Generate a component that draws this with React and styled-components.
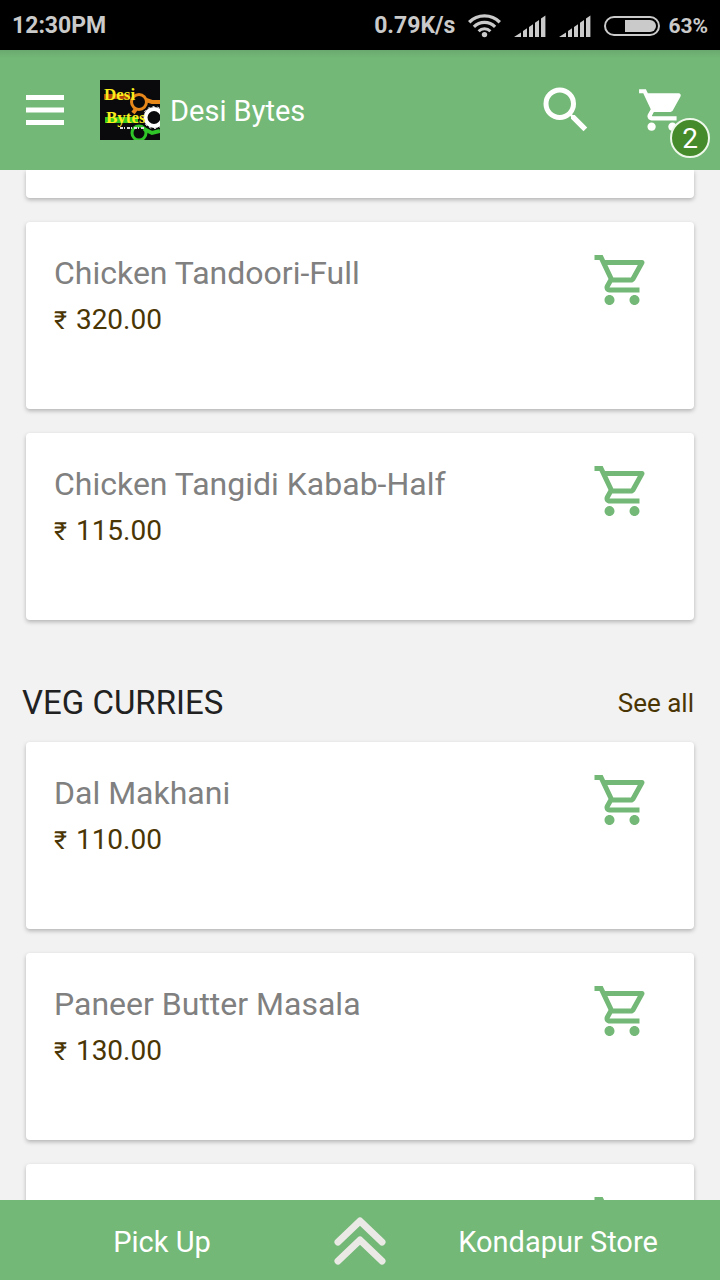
import React from "react";
import styled, { createGlobalStyle } from "styled-components";
import { MdSearch, MdShoppingCart, MdOutlineShoppingCart } from "react-icons/md";

const sections = [
  {
    id: "starters",
    items: [
      { id: 1, cut: true },
      { id: 2, title: "Chicken Tandoori-Full", price: "320.00" },
      { id: 3, title: "Chicken Tangidi Kabab-Half", price: "115.00" }
    ]
  },
  {
    id: "veg-curries",
    title: "VEG CURRIES",
    items: [
      { id: 4, title: "Dal Makhani", price: "110.00" },
      { id: 5, title: "Paneer Butter Masala", price: "130.00" },
      { id: 6 }
    ]
  }
];

export default function App() {
  return (
    <>
      <GlobalStyle />
      <Screen>
        <StatusBar />
        <Navbar />
        <Menu>
          {sections.map(section => (
            <section key={section.id} id={section.id}>
              {section.title && (
                <SectionHeader>
                  <h2>{section.title}</h2>
                  <a href={`#${section.id}`}>See all</a>
                </SectionHeader>
              )}
              <CardList>
                {section.items.map(item => (
                  <Product key={item.id} item={item} />
                ))}
              </CardList>
            </section>
          ))}
        </Menu>
        <BottomBar>
          <BarButton>Pick Up</BarButton>
          <BarButton aria-label="Expand">
            <ChevronsIcon />
          </BarButton>
          <BarButton>Kondapur Store</BarButton>
        </BottomBar>
      </Screen>
    </>
  );
}

function StatusBar() {
  return (
    <StatusWrapper>
      <span>12:30PM</span>
      <StatusGroup>
        <span>0.79K/s</span>
        <WifiIcon />
        <SignalIcon />
        <SignalIcon />
        <Battery>
          <BatteryIcon />
          <small>63%</small>
        </Battery>
      </StatusGroup>
    </StatusWrapper>
  );
}

function Navbar() {
  return (
    <NavWrapper>
      <IconButton aria-label="Menu">
        <MenuIcon />
      </IconButton>
      <Brand href="#home">
        <Logo />
        <span>Desi Bytes</span>
      </Brand>
      <IconButton aria-label="Search">
        <MdSearch size={60} />
      </IconButton>
      <CartButton aria-label="Cart">
        <MdShoppingCart size={50} />
        <Badge>2</Badge>
      </CartButton>
    </NavWrapper>
  );
}

function Product({ item }) {
  // the card that is already scrolled under the navbar
  if (item.cut) {
    return <Card $cut />;
  }

  return (
    <Card>
      <CardText>
        <h3>{item.title}</h3>
        {item.price && (
          <p>
            <Rupee>₹</Rupee> {item.price}
          </p>
        )}
      </CardText>
      <IconButton $green aria-label="Add to cart">
        <MdOutlineShoppingCart size={60} />
      </IconButton>
    </Card>
  );
}

function MenuIcon() {
  return (
    <svg width="38" height="30" viewBox="0 0 38 30" fill="currentColor">
      <rect width="38" height="5" />
      <rect y="12.5" width="38" height="5" />
      <rect y="25" width="38" height="5" />
    </svg>
  );
}

function WifiIcon() {
  return (
    <svg width="33" height="24" viewBox="0 0 33 24" fill="none" stroke="currentColor">
      <path d="M1.2 8.2a21.6 21.6 0 0 1 30.6 0" strokeWidth="3.4" />
      <path d="M5.9 12.8a15 15 0 0 1 21.2 0" strokeWidth="3.2" />
      <path d="M10.6 17.2a8.4 8.4 0 0 1 11.8 0" strokeWidth="3" />
      <circle cx="16.5" cy="20.6" r="2.7" fill="currentColor" stroke="none" />
    </svg>
  );
}

function SignalIcon() {
  return (
    <svg width="32" height="22" viewBox="0 0 32 22" fill="currentColor">
      <path d="M0 22L7 17.4V22zM9 16l4-2.8V22H9zM15 12l4-2.8V22h-4zM21 7.8l4-2.8V22h-4zM27 3.4L31.4 .4V22H27z" />
    </svg>
  );
}

function BatteryIcon() {
  return (
    <svg width="56" height="20" viewBox="0 0 56 20">
      <rect x="1" y="1" width="54" height="18" rx="9" fill="none" stroke="currentColor" strokeWidth="2" />
      <path d="M21 4h25a6 6 0 0 1 0 12H21z" fill="currentColor" />
    </svg>
  );
}

function ChevronsIcon() {
  return (
    <svg
      width="52"
      height="50"
      viewBox="0 0 52 50"
      fill="none"
      stroke="#ebe9e6"
      strokeWidth="7"
      strokeLinecap="round"
      strokeLinejoin="round"
    >
      <path d="M4 25L26 4L48 25M4 44L26 23L48 44" />
    </svg>
  );
}

function Logo() {
  return (
    <svg width="60" height="60" viewBox="0 0 60 60">
      <rect width="60" height="60" fill="#0a0a0c" />
      <path d="M4 14h26v5H4z" fill="#b4480c" />
      <path d="M5 37h33v6H5z" fill="#35c81e" />
      <g fill="none" strokeWidth="3">
        <circle cx="39" cy="22" r="7.5" stroke="#e8871a" />
        <path d="M46 20l6 2h8M36 29l-3 4" stroke="#e8871a" strokeWidth="4" />
        <circle cx="39" cy="53" r="7" stroke="#2fc528" />
        <path d="M44 49l8 4 8-2" stroke="#2fc528" strokeWidth="4" />
        <circle cx="54" cy="37.5" r="8.5" stroke="#fff" strokeWidth="4" />
        <circle cx="54" cy="37.5" r="11" stroke="#fff" strokeWidth="1" strokeDasharray="2 3" />
      </g>
      <LogoText x="4" y="20">Desi</LogoText>
      <LogoText x="6" y="43">Bytes</LogoText>
      <path d="M20 48h24" stroke="#ddd" strokeWidth="2" strokeDasharray="3 1 1 2" />
    </svg>
  );
}

const GlobalStyle = createGlobalStyle`
  * {
    box-sizing: border-box;
  }

  body {
    margin: 0;
    background: #f2f2f2;
    font-family: Roboto, "Noto Sans", sans-serif;
  }

  svg {
    display: block;
    flex-shrink: 0;
  }

  h2, h3, p {
    margin: 0;
    font-weight: 400;
  }
`;

const Screen = styled.div`
  display: flex;
  flex-direction: column;
  height: 100vh;
`;

const StatusWrapper = styled.div`
  display: flex;
  align-items: center;
  justify-content: space-between;
  flex-shrink: 0;
  height: 50px;
  padding: 1px 12px 0;
  background: #000;
  color: #cacaca;
  font-size: 23px;
  font-weight: 700;
`;

const StatusGroup = styled.div`
  display: flex;
  align-items: center;
  gap: 13px;
`;

const Battery = styled.div`
  display: flex;
  align-items: center;
  gap: 8px;

  small {
    font-size: 21px;
  }
`;

const NavWrapper = styled.header`
  display: flex;
  align-items: center;
  flex-shrink: 0;
  height: 120px;
  padding: 0 33px 0 26px;
  background: linear-gradient(#6aa970, #73b876 8px);
  color: #fff;
`;

const Brand = styled.a`
  display: flex;
  align-items: center;
  flex: 1;
  gap: 10px;
  margin-left: 36px;
  color: #fff;
  font-size: 29px;
  text-decoration: none;

  span {
    padding-top: 2px;
  }
`;

const IconButton = styled.button`
  flex-shrink: 0;
  padding: 0;
  border: none;
  background: none;
  color: ${props => (props.$green ? "#73b876" : "inherit")};
  cursor: pointer;
`;

const CartButton = styled(IconButton)`
  position: relative;
  margin-left: 41px;
`;

const Badge = styled.span`
  position: absolute;
  right: -23px;
  bottom: -23px;
  width: 40px;
  height: 40px;
  border: 2px solid #eef8ea;
  border-radius: 50%;
  background: #458b2c;
  color: #fff;
  font-family: Roboto, sans-serif;
  font-size: 28px;
  line-height: 38px;
  text-align: center;
`;

const Menu = styled.main`
  flex: 1;
  min-height: 0;
  padding: 0 26px;
  overflow-y: auto;
  scrollbar-width: none;
`;

const SectionHeader = styled.div`
  display: flex;
  align-items: center;
  justify-content: space-between;
  margin: 63px 0 19px -4px;
  line-height: 40px;

  h2 {
    color: #212121;
    font-size: 33px;
  }

  a {
    color: #4a3505;
    font-size: 26px;
    text-decoration: none;
  }
`;

const CardList = styled.div`
  display: flex;
  flex-direction: column;
  gap: 24px;
`;

const Card = styled.article`
  display: flex;
  align-items: flex-start;
  justify-content: space-between;
  min-height: ${props => (props.$cut ? "28px" : "187px")};
  padding: ${props => (props.$cut ? "0" : "28px 42px 28px 28px")};
  border-radius: ${props => (props.$cut ? "0 0 4px 4px" : "4px")};
  background: #fff;
  box-shadow: 0 2px 4px rgba(0, 0, 0, 0.26);
`;

const CardText = styled.div`
  margin-top: 4px;

  h3 {
    color: #808080;
    font-size: 32px;
    line-height: 38px;
  }

  p {
    margin-top: 11px;
    color: #4a3505;
    font-size: 28px;
    line-height: 34px;
  }
`;

const Rupee = styled.span`
  margin-right: 2px;
  font-size: 25px;
`;

const BottomBar = styled.footer`
  display: grid;
  grid-template-columns: 1fr 72px 1fr;
  flex-shrink: 0;
  height: 80px;
  background: #73b876;
`;

const BarButton = styled.button`
  display: flex;
  align-items: center;
  justify-content: center;
  padding: 3px 0 0;
  border: none;
  background: none;
  color: #fff;
  font-family: inherit;
  font-size: 29px;
  cursor: pointer;
`;

const LogoText = styled.text`
  fill: #f8ee1c;
  font-family: "Liberation Serif", serif;
  font-size: 17px;
  font-weight: 700;
`;
